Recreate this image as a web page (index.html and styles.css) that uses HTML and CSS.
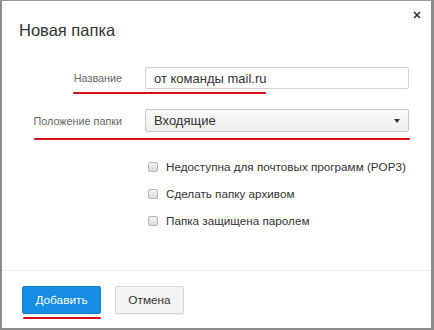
FILE: index.html
```html
<!DOCTYPE html>
<html lang="ru">
<head>
  <meta charset="UTF-8">
  <meta name="viewport" content="width=device-width, initial-scale=1">
  <title>Новая папка</title>
  <link rel="stylesheet" href="styles.css">
</head>
<body>

<div class="dialog">
  <div class="dialog-head">
    <h2>Новая папка</h2>
    <button class="close" aria-label="Закрыть">
      <svg width="8" height="8" viewBox="0 0 8 8"><path d="M1 1L7 7M7 1L1 7" stroke="#333" stroke-width="1.6" fill="none"/></svg>
    </button>
  </div>

  <div class="form">
    <div class="form-row">
      <label for="folderName">Название</label>
      <input type="text" id="folderName" value="от команды mail.ru">
      <span class="mark mark-name"></span>
    </div>
    <div class="form-row row-select">
      <label>Положение папки</label>
      <div class="select">
        <span>Входящие</span>
        <span class="arrow"></span>
      </div>
      <span class="mark mark-place"></span>
    </div>

    <div class="options">
      <label class="check"><span class="box"></span>Недоступна для почтовых программ (POP3)</label>
      <label class="check"><span class="box"></span>Сделать папку архивом</label>
      <label class="check"><span class="box"></span>Папка защищена паролем</label>
    </div>
  </div>

  <div class="dialog-foot">
    <div class="btn-wrap">
      <button class="btn btn-primary">Добавить</button>
      <span class="mark mark-add"></span>
    </div>
    <button class="btn btn-cancel">Отмена</button>
  </div>
</div>

</body>
</html>
```

FILE: styles.css
```css
* {
  box-sizing: border-box;
}
body {
  margin: 0;
  font-family: 'Liberation Sans', Arial, sans-serif;
  background: #8a8a8a;
}
.dialog {
  width: 434px;
  height: 330px;
  background: #fff;
  border-left: 2px solid #8c8c8c;
  border-top: 1px solid #9a9a9a;
  border-right: 3px solid #8c8c8c;
  border-bottom: 2px solid #8c8c8c;
  display: flex;
  flex-direction: column;
}
.dialog-head {
  position: relative;
  padding: 19px 0 0 17px;
  height: 60px;
}
h2 {
  margin: 0;
  font-size: 16.5px;
  font-weight: 400;
  color: #333;
  line-height: 20px;
}
.close {
  position: absolute;
  top: 10px;
  right: 10px;
  border: none;
  background: none;
  padding: 0;
  width: 8px;
  height: 8px;
  display: flex;
}
.form {
  flex: 1;
}
.form-row {
  position: relative;
  display: grid;
  grid-template-columns: 120px 264px;
  column-gap: 23px;
  align-items: center;
  margin-top: 6px;
}
.form-row label {
  text-align: right;
  font-size: 10.8px;
  color: #666;
}
.row-select {
  margin-top: 20px;
}
input {
  height: 22px;
  border: 1px solid #d2d2d2;
  border-radius: 2px;
  padding: 0 8px;
  font-family: inherit;
  font-size: 13px;
  color: #333;
  box-shadow: inset 0 1px 1px rgba(0,0,0,0.04);
}
.select {
  height: 23px;
  border: 1px solid #c8c8c8;
  border-radius: 2px;
  padding: 0 8px;
  background: linear-gradient(#fafafa, #eeeeee);
  display: flex;
  align-items: center;
  justify-content: space-between;
  font-size: 13px;
  color: #333;
}
.arrow {
  width: 0;
  height: 0;
  border-left: 3px solid transparent;
  border-right: 3px solid transparent;
  border-top: 4px solid #333;
}
.mark {
  position: absolute;
  height: 2px;
  background: #d0101a;
  border-radius: 1px;
}
.mark-name {
  left: 71px;
  width: 193px;
  top: 25px;
}
.mark-place {
  left: 32px;
  width: 376px;
  top: 29px;
}
.options {
  display: flex;
  flex-direction: column;
  gap: 14px;
  padding: 28px 0 0 146px;
}
.check {
  display: flex;
  align-items: center;
  font-size: 11.7px;
  color: #333;
  line-height: 13px;
}
.box {
  width: 10px;
  height: 10px;
  border: 1px solid #b5b5b5;
  border-radius: 2px;
  background: linear-gradient(#f2f2f2, #dcdcdc);
  margin-right: 8px;
}
.dialog-foot {
  border-top: 1px solid #ececec;
  height: 58px;
  padding: 15px 0 0 20px;
  display: flex;
  align-items: flex-start;
  gap: 14px;
}
.btn-wrap {
  position: relative;
}
.btn {
  height: 28px;
  padding: 0;
  border: 1px solid #d6d6d6;
  border-radius: 2px;
  background: #f4f4f4;
  font-family: inherit;
  font-size: 11.8px;
  color: #333;
  box-shadow: 0 1px 1px rgba(0,0,0,0.06);
}
.btn-primary {
  width: 79px;
  background: #168de2;
  border-color: #1282d2;
  color: #fff;
}
.btn-cancel {
  width: 69px;
}
.mark-add {
  left: 1px;
  width: 78px;
  top: 31px;
}
```
